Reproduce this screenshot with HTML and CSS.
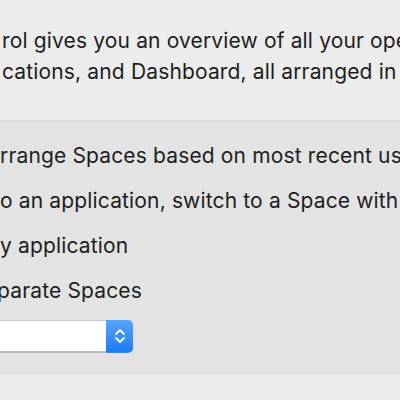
FILE: index.html
```html
<!DOCTYPE html>
<html lang="en">
<head>
  <meta charset="UTF-8" />
  <title>Mission Control</title>
  <link rel="stylesheet" href="styles.css">
</head>
<body>
  <div class="intro">
    <p class="cut-r">rol gives you an overview of all your open</p>
    <p class="cut-c">cations, and Dashboard, all arranged in a</p>
  </div>

  <div class="options">
    <div class="row">rrange Spaces based on most recent use</div>
    <div class="row">o an application, switch to a Space with</div>
    <div class="row">y application</div>
    <div class="row cut-p">parate Spaces</div>

    <div class="popup">
      <div class="popup-field"></div>
      <div class="popup-arrows">
        <svg width="14" height="20" viewBox="0 0 14 20">
          <path d="M3 8 L7 4 L11 8" fill="none" stroke="#fff" stroke-width="1.8" stroke-linecap="round" stroke-linejoin="round"/>
          <path d="M3 12 L7 16 L11 12" fill="none" stroke="#fff" stroke-width="1.8" stroke-linecap="round" stroke-linejoin="round"/>
        </svg>
      </div>
    </div>
  </div>

  <div class="footer"></div>
</body>
</html>
```

FILE: styles.css
```css
body {
  margin: 0;
  width: 400px;
  height: 400px;
  overflow: hidden;
  background: #ececec;
  font-family: Inter, "Noto Sans", sans-serif;
  font-size: 21px;
  letter-spacing: 0.15px;
  color: #1e1e1e;
}
p {
  margin: 0;
  white-space: nowrap;
  line-height: 31px;
}
.intro {
  height: 95px;
  padding-top: 25px;
  border-bottom: 1px solid #d8d8d8;
}
.cut-r {
  padding-left: 2px;
}
.cut-c {
  padding-left: 2px;
}
.options {
  background: #e3e3e3;
  padding: 12px 0 20px;
  border-bottom: 1px solid #dadada;
}
.row {
  height: 45px;
  line-height: 45px;
  white-space: nowrap;
}
.cut-p {
  text-indent: -3px;
}
.popup {
  display: flex;
  margin-top: 7px;
  height: 33px;
}
.popup-field {
  width: 106px;
  background: #fff;
  border-top: 1px solid #c8c8c8;
  border-bottom: 2px solid #bdbdbd;
  box-sizing: border-box;
}
.popup-arrows {
  width: 27px;
  display: flex;
  align-items: center;
  justify-content: center;
  background: linear-gradient(#5aa5fb, #1b7cf2);
  border-radius: 0 5px 5px 0;
  border-bottom: 1px solid #3f8ae8;
  box-sizing: border-box;
}
.footer {
  height: 26px;
  background: #ececec;
}
```
